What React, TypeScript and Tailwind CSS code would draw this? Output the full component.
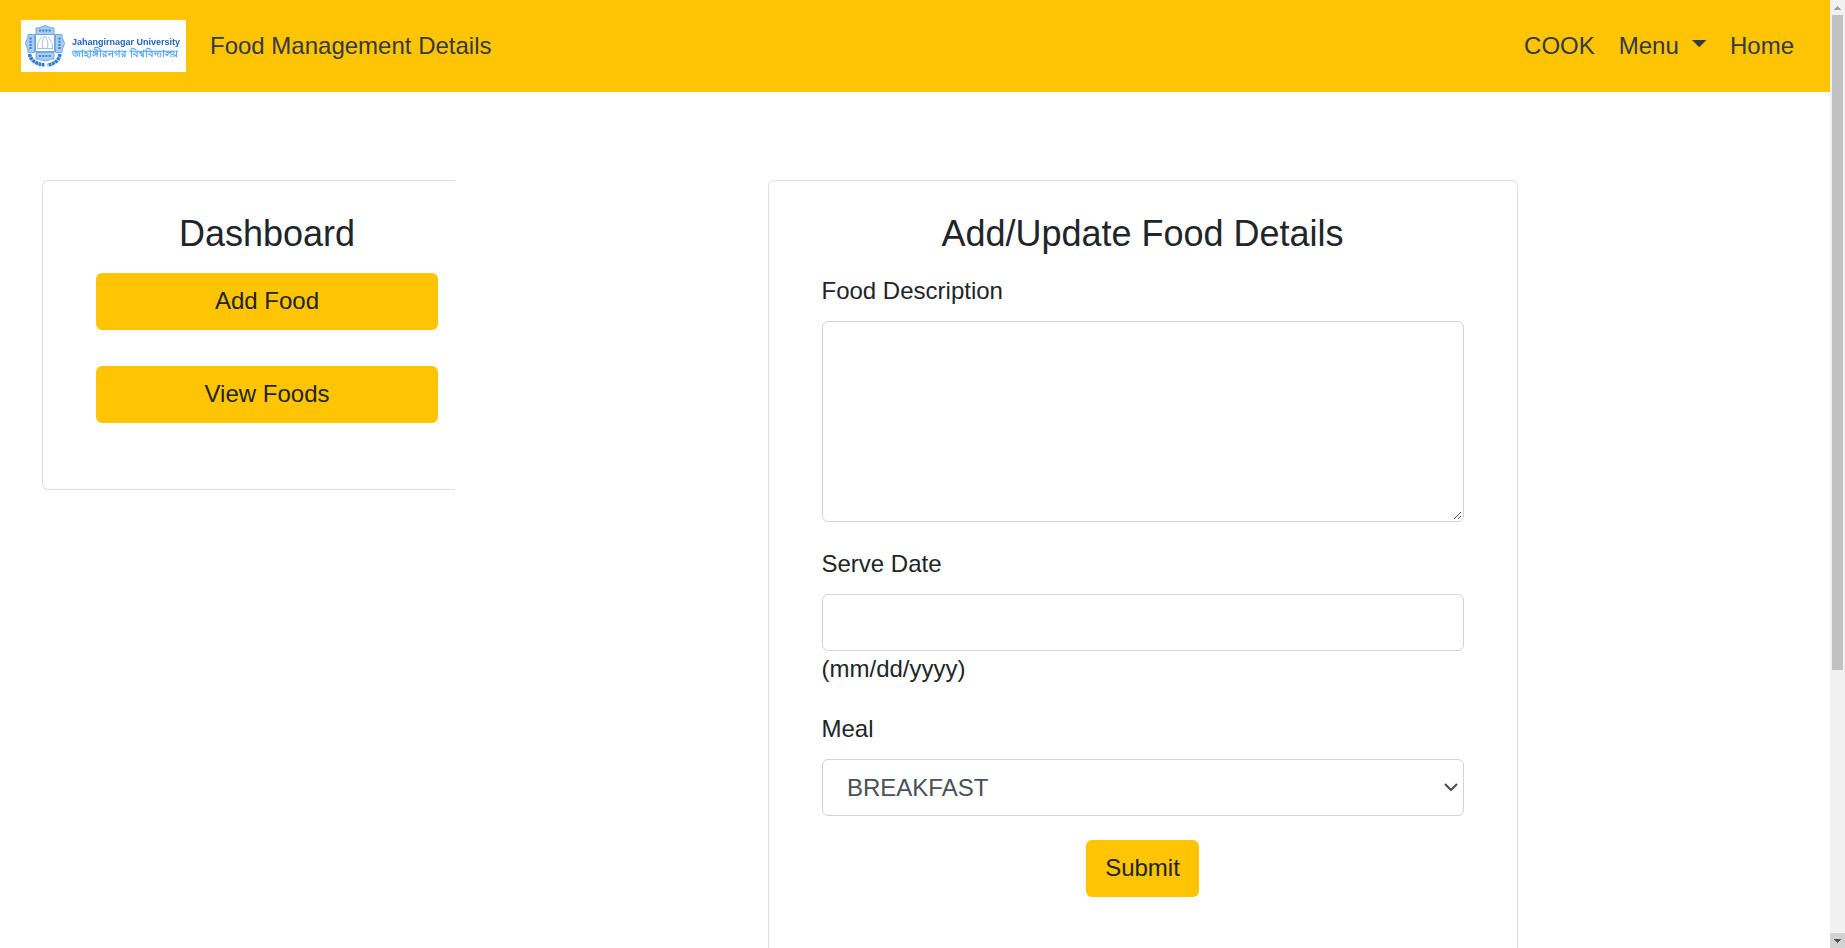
import type { ReactNode } from "react";

function Logo() {
  return (
    <div className="flex h-[52px] w-[165px] shrink-0 items-center bg-white pl-[3px]">
      <svg width="43" height="46" viewBox="0 -1 43 46" className="shrink-0 blur-[0.4px]" fill="none">
        <g fill="#a9cdf2" stroke="#5b9be0" strokeWidth=".8">
          <path d="M12 4q4 0 5-1 4-3 8 0 1 1 5 1v6.500H12z" />
          <path d="M12 28.500h18V35q-4 0-5 1-4 2-8 0-1-1-5-1z" />
          <path d="M10.500 10.500v18H4q0-4-1-5-3-4 0-8 1-1 1-5z" />
          <path d="M31.500 10.500H38q0 4 1 5 3 4 0 8-1 1-1 5h-6.500z" />
        </g>
        <g stroke="#3f82d2" strokeWidth="2.200" strokeDasharray="2 1.200">
          <path d="M15 6.500h12M15 32h12M6.500 13.500v12M35.500 13.500v12" />
        </g>
        <rect x="11.500" y="10.500" width="19" height="17" fill="#fff" stroke="#6aa5e4" />
        <path d="M21 12c-3 4-3.500 9-2 12.500h4c1.500-3.500 1-8.500-2-12.500zM18 13c-3 3-5 7-4.500 11.500H19M24 13c3 3 5 7 4.500 11.500H23" stroke="#8fb0dc" strokeWidth=".8" />
        <path d="M5.500 30c1 6 6 10 15 11" stroke="#2f80d4" strokeWidth="3.600" strokeDasharray="3 .5" />
        <path d="M36 30c-1 6-5 10-12.500 11" stroke="#2f80d4" strokeWidth="3.600" strokeDasharray="3 .5" />
      </svg>
      <div className="ml-[5px] flex flex-col pt-[4px] whitespace-nowrap blur-[0.3px]">
        <span className="text-[9px] leading-[11px] font-bold text-[#1f63c2]">Jahangirnagar University</span>
        <span className="text-[10px] leading-[12px] font-bold text-[#4aa2f8]">জাহাঙ্গীরনগর বিশ্ববিদ্যালয়</span>
      </div>
    </div>
  );
}

function Field({ label, children }: { label: string; children: ReactNode }) {
  return (
    <div className="mb-6">
      <label className="mb-3 block">{label}</label>
      {children}
    </div>
  );
}

const control = "block w-full rounded-md border border-[#ced4da] bg-white";
const button = "flex h-[57px] items-center justify-center rounded-md bg-[#ffc404] pb-px text-[#212529]";

function Scrollbar() {
  return (
    <div className="flex w-[15px] shrink-0 flex-col items-center bg-[#f1f1f1]">
      <div className="flex h-[15px] w-full items-center justify-center">
        <svg width="7" height="4" viewBox="0 0 7 4" shapeRendering="crispEdges" fill="#a3a3a3">
          <path d="M3 0h1v1h1v1h1v1h1v1H0V3h1V2h1V1h1z" />
        </svg>
      </div>
      <div className="h-[655px] w-[11px] bg-[#c1c1c1]" />
      <div className="mt-auto flex h-[15px] w-full items-center justify-center bg-[#d2d2d2]">
        <svg width="7" height="4" viewBox="0 0 7 4" shapeRendering="crispEdges" fill="#505050">
          <path d="M0 0h7v1H6v1H5v1H4v1H3V3H2V2H1V1H0z" />
        </svg>
      </div>
    </div>
  );
}

export default function App() {
  return (
    <div className="flex h-[948px] w-[1845px] overflow-hidden bg-white font-['Liberation_Sans',Arial,sans-serif] text-[24px] leading-9 text-[#212529]">
      <div className="flex w-[1830px] flex-col">
        <nav className="flex h-[92px] shrink-0 items-center bg-[#ffc404] pr-9 pl-[21px] text-[#343a40]">
          <Logo />
          <a className="ml-6">Food Management Details</a>
          <div className="ml-auto flex gap-6">
            <a>COOK</a>
            <a className="flex">
              Menu
              <svg className="mt-3 ml-[12.800px]" width="14.400" height="7.200" viewBox="0 0 14.400 7.200" fill="#343a40">
                <path d="M0 0h14.400L7.200 7.200z" />
              </svg>
            </a>
            <a>Home</a>
          </div>
        </nav>
        <main className="flex items-start pt-[88px] pl-[42px]">
          <section className="h-[310px] w-[413px] rounded-l-md border border-r-0 border-[#dfdfdf] pt-[31px] pr-[17px] pl-[53px]">
            <h2 className="mb-[18px] text-center text-[36px] leading-[43px]">Dashboard</h2>
            <a className={button}>Add Food</a>
            <a className={`${button} mt-9`}>View Foods</a>
          </section>
          <section className="ml-[312.500px] h-[800px] w-[750px] rounded-md border border-[#dfdfdf] px-[53px] pt-[31px]">
            <h2 className="mb-[18px] text-center text-[36px] leading-[43px]">Add/Update Food Details</h2>
            <Field label="Food Description">
              <div className="relative">
                <textarea className={`${control} h-[201px] resize-none`} />
                <svg className="absolute right-[3px] bottom-[3px]" width="7" height="7" viewBox="0 0 7 7" shapeRendering="crispEdges" fill="#505050">
                  <path d="M6 0h1v1H6zM5 1h1v1H5zM4 2h1v1H4zM3 3h1v1H3zM2 4h1v1H2zM1 5h1v1H1zM0 6h1v1H0zM6 4h1v1H6zM5 5h1v1H5zM4 6h1v1H4z" />
                </svg>
              </div>
            </Field>
            <Field label="Serve Date">
              <input className={`${control} h-[57px]`} />
              <span className="block">(mm/dd/yyyy)</span>
            </Field>
            <Field label="Meal">
              <div className={`${control} flex h-[57px] items-center justify-between pr-[5px] pl-[24.500px] text-[#495057]`}>
                BREAKFAST
                <svg width="14" height="9" viewBox="0 0 14 9" fill="none" stroke="#495057" strokeWidth="2.200">
                  <path d="M1 1l6 6 6-6" />
                </svg>
              </div>
            </Field>
            <button className={`${button} mx-auto w-[113px]`}>Submit</button>
          </section>
        </main>
      </div>
      <Scrollbar />
    </div>
  );
}
